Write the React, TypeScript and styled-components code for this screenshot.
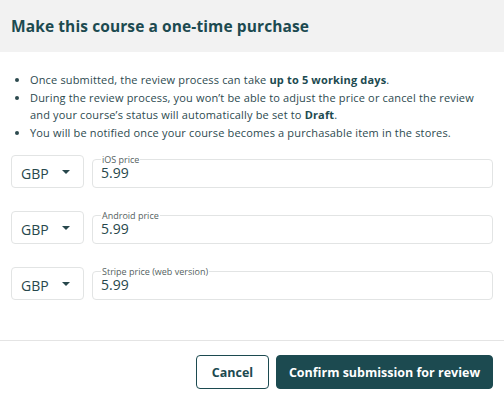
import React from "react";
import styled, { createGlobalStyle } from "styled-components";

const Global = createGlobalStyle`
  html, body { margin: 0; padding: 0; background: #ffffff; }
  body { font-family: "Open Sans", "Noto Sans", Arial, sans-serif; color: #27474c; }
  * { box-sizing: border-box; }
`;

const Dialog = styled.div`
  width: 504px;
  height: 401px;
  display: flex;
  flex-direction: column;
  background: #fff;
`;

const Header = styled.div`
  height: 52px;
  background: #f2f2f2;
  display: flex;
  align-items: center;
  padding-left: 11px;
`;

const Title = styled.h2`
  margin: 0;
  font-size: 15.5px;
  font-weight: 700;
  color: #1c4a50;
  letter-spacing: 0.1px;
`;

const Body = styled.div`
  padding: 19px 11px 0 11px;
  flex: 1;
`;

const List = styled.ul`
  list-style: none;
  margin: 0 0 14px 0;
  padding: 0;
`;

const Item = styled.li`
  display: flex;
  font-size: 11px;
  line-height: 17.5px;
  letter-spacing: 0.16px;
  color: #2d4a4f;
`;

const Dot = styled.span`
  flex: none;
  width: 4px;
  height: 4px;
  border-radius: 50%;
  background: #2d4a4f;
  margin: 7px 11px 0 4px;
`;

const Strong = styled.b`
  font-weight: 700;
  color: #1c4a50;
`;

const Rows = styled.div`
  display: flex;
  flex-direction: column;
  gap: 23px;
`;

const Row = styled.div`
  display: flex;
  gap: 8px;
  height: 33px;
`;

const Select = styled.div`
  width: 73px;
  flex: none;
  border: 1px solid #e2e4e4;
  border-radius: 4px;
  display: flex;
  align-items: center;
  padding: 3px 0 0 9px;
  font-size: 14px;
  color: #27474c;
`;

const Caret = styled.span`
  width: 0;
  height: 0;
  border-left: 4px solid transparent;
  border-right: 4px solid transparent;
  border-top: 4px solid #27474c;
  margin-left: 13px;
  margin-bottom: 2px;
`;

const Field = styled.fieldset`
  flex: 1;
  margin: 0;
  border: 1px solid #e2e4e4;
  border-radius: 4px;
  padding: 0 8px 0 8px;
  min-width: 0;
`;

const Legend = styled.legend`
  font-size: 9px;
  line-height: 9px;
  padding: 0 1px;
  margin-left: 0;
  color: #555f61;
`;

const Value = styled.div`
  font-size: 14px;
  line-height: 16px;
  color: #27474c;
  margin-top: 1px;
`;

const Footer = styled.div`
  border-top: 1px solid #e4e4e4;
  height: 61px;
  display: flex;
  justify-content: flex-end;
  align-items: flex-start;
  gap: 7px;
  padding: 14px 11px 0 0;
`;

const Button = styled.button<{ $primary?: boolean }>`
  height: 34px;
  border-radius: 4px;
  font-family: inherit;
  font-size: 12.5px;
  font-weight: 700;
  cursor: pointer;
  padding: 0;
  border: 1px solid #1c4a50;
  background: ${(p) => (p.$primary ? "#1c4a50" : "#ffffff")};
  color: ${(p) => (p.$primary ? "#ffffff" : "#1c4a50")};
  width: ${(p) => (p.$primary ? "217px" : "73px")};
`;

const prices = [
  { label: "iOS price", value: "5.99" },
  { label: "Android price", value: "5.99" },
  { label: "Stripe price (web version)", value: "5.99" },
];

export default function App() {
  return (
    <Dialog>
      <Global />
      <Header>
        <Title>Make this course a one-time purchase</Title>
      </Header>
      <Body>
        <List>
          <Item>
            <Dot />
            <span>
              Once submitted, the review process can take <Strong>up to 5 working days</Strong>.
            </span>
          </Item>
          <Item>
            <Dot />
            <span>
              During the review process, you won’t be able to adjust the price or cancel the review and your course’s status will automatically be set to <Strong>Draft</Strong>.
            </span>
          </Item>
          <Item>
            <Dot />
            <span>You will be notified once your course becomes a purchasable item in the stores.</span>
          </Item>
        </List>
        <Rows>
          {prices.map((p) => (
            <Row key={p.label}>
              <Select>
                GBP
                <Caret />
              </Select>
              <Field>
                <Legend>{p.label}</Legend>
                <Value>{p.value}</Value>
              </Field>
            </Row>
          ))}
        </Rows>
      </Body>
      <Footer>
        <Button>Cancel</Button>
        <Button $primary>Confirm submission for review</Button>
      </Footer>
    </Dialog>
  );
}
